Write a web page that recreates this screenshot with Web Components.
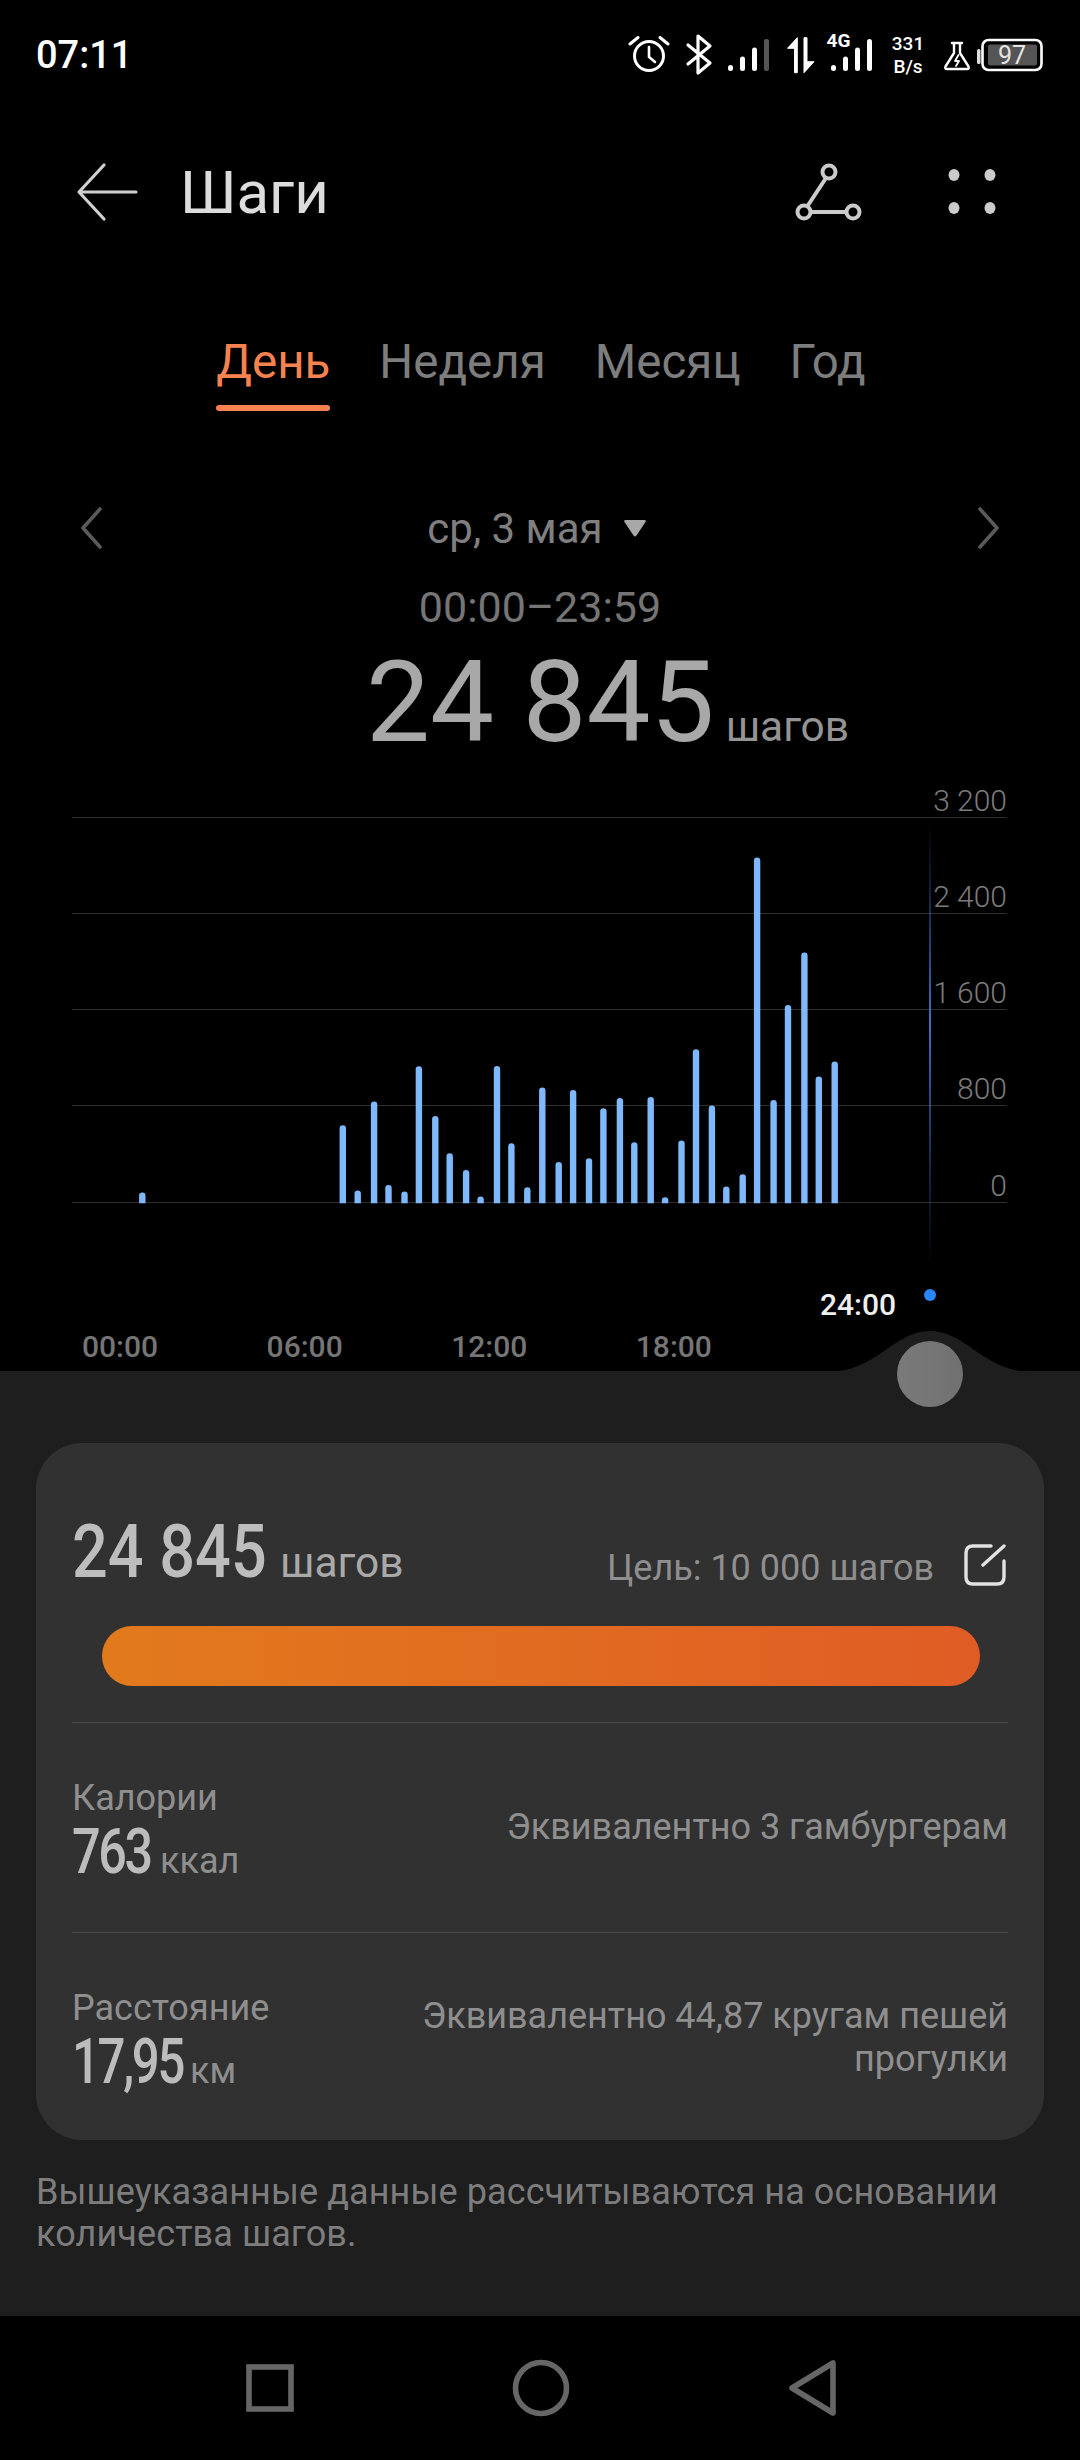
<!DOCTYPE html>
<html lang="ru">
<head>
<meta charset="utf-8">
<title>Шаги</title>
<style>
  html, body { margin: 0; padding: 0; background: #000; }
  body { width: 1080px; height: 2460px; overflow: hidden; font-family: Roboto, "Noto Sans", sans-serif; }
</style>
</head>
<body>
<status-bar></status-bar>
<app-toolbar>Шаги</app-toolbar>
<period-tabs></period-tabs>
<date-nav>ср, 3 мая</date-nav>
<step-summary></step-summary>
<step-chart></step-chart>
<health-panel>
  <stat-card>
    <goal-header></goal-header>
    <stat-row style="--value-width: 78px; --value-scale: .8">
      <span slot="label">Калории</span>
      <span slot="value">763</span>
      <span slot="unit">ккал</span>
      <span slot="note">Эквивалентно 3 гамбургерам</span>
    </stat-row>
    <stat-row style="--value-width: 108px; --value-scale: .78">
      <span slot="label">Расстояние</span>
      <span slot="value">17,95</span>
      <span slot="unit">км</span>
      <span slot="note">Эквивалентно 44,87 кругам пешей<br>прогулки</span>
    </stat-row>
  </stat-card>
  <span slot="note">Вышеуказанные данные рассчитываются на основании количества шагов.</span>
</health-panel>
<nav-bar></nav-bar>

<script>
class StatusBar extends HTMLElement {
    constructor() {
        super();
        this.attachShadow({ mode: 'open' });
    }

    connectedCallback() {
        this.shadowRoot.innerHTML = `
            <style>
                :host { display: flex; align-items: center; height: 110px; padding: 0 35.500px 0 36px; color: #fff; box-sizing: border-box; }
                .time { font-size: 38px; font-weight: 500; margin-right: auto; }
                .icons { display: flex; align-items: center; height: 44px; }
                svg { display: block; height: 44px; }
                .net { position: relative; }
                .net span { position: absolute; left: 0; top: -2px; font-size: 19px; font-weight: 700; line-height: 20px; }
                .speed { display: flex; flex-direction: column; align-items: center; width: 34px; font-size: 19px; font-weight: 500; line-height: 23px; margin: 0 18px 0 16.500px; }
            </style>
            <span class="time">07:11</span>
            <div class="icons">
                <svg width="42" viewBox="0 0 42 44" fill="none" stroke="#fff" stroke-width="3" stroke-linecap="round">
                    <circle cx="21" cy="23" r="14.500"/>
                    <path d="M21 14v10l6 5" stroke-width="2.600"/>
                    <path d="M2 11 10 4.500M40 11 32 4.500"/>
                </svg>
                <svg width="28" style="margin-left:15px" viewBox="0 0 28 44" fill="none" stroke="#fff" stroke-width="3.200" stroke-linejoin="round" stroke-linecap="round">
                    <path d="M3 12 25 30 13 40V3l12 10L3 31"/>
                </svg>
                <svg width="46" style="margin-left:14px" viewBox="0 0 46 44" fill="#fff">
                    <rect x="1" y="32" width="5" height="6" rx="2.500"/>
                    <rect x="13" y="23.500" width="5" height="14.500" rx="2.500"/>
                    <rect x="25" y="14.500" width="5" height="23.500" rx="2.500"/>
                    <rect x="37" y="6" width="5" height="32" rx="2" fill="#555"/>
                </svg>
                <svg width="28" style="margin-left:14px" viewBox="0 0 28 44" fill="#fff" stroke="#fff" stroke-width="1" stroke-linejoin="round">
                    <path d="M10.300 4.700V39.700H7.500V15.300H.5Z"/>
                    <path d="M17 39.700V4.700H20V28.700H27Z"/>
                </svg>
                <div class="net" style="margin-left:11.500px">
                    <span>4G</span>
                    <svg width="48" viewBox="0 0 48 44" fill="#fff">
                        <rect x="4" y="32" width="5" height="6" rx="2.500"/>
                        <rect x="16" y="23.500" width="5" height="14.500" rx="2.500"/>
                        <rect x="28" y="14.500" width="5" height="23.500" rx="2.500"/>
                        <rect x="40" y="6" width="5" height="32" rx="2.500"/>
                    </svg>
                </div>
                <div class="speed"><span>331</span><span>B/s</span></div>
                <svg width="28" viewBox="0 0 28 44" fill="none" stroke="#fff" stroke-width="2.400" stroke-linejoin="round" stroke-linecap="round">
                    <path d="M9 10h10M11 10v10L2.500 33.500Q1.500 36 4 36H24Q26.500 36 25.500 33.500L17 20V10"/>
                    <path d="M15.500 22 12 28h4l-3 5" stroke-width="1.800"/>
                </svg>
                <svg width="68" style="margin-left:5.500px" viewBox="0 0 68 44" fill="none">
                    <rect x="0" y="16" width="3.500" height="15" rx="1.500" fill="#ddd"/>
                    <rect x="5.500" y="7" width="59" height="30" rx="6" stroke="#fff" stroke-width="2.600"/>
                    <rect x="11" y="11.500" width="49" height="21" rx="2" fill="#555"/>
                    <text x="35" y="31" text-anchor="middle" font-family="Roboto" font-size="25" fill="#e4e4e4">97</text>
                </svg>
            </div>
        `;
    }
}

class AppToolbar extends HTMLElement {
    constructor() {
        super();
        this.attachShadow({ mode: 'open' });
    }

    connectedCallback() {
        this.shadowRoot.innerHTML = `
            <style>
                :host { display: flex; align-items: center; height: 164px; padding: 0 0 0 76px; color: #dcdcdc; }
                svg { display: block; }
                .title { font-size: 60px; margin-left: 40px; margin-right: auto; }
            </style>
            <svg width="64" height="60" viewBox="0 0 64 60" fill="none" stroke="#cfcfcf" stroke-width="3.200" stroke-linecap="round" stroke-linejoin="round">
                <path d="M60 30H3M28 3 3 30l25 27"/>
            </svg>
            <span class="title"><slot></slot></span>
            <svg width="70" height="64" viewBox="0 0 70 64" fill="none" stroke="#cbcbcb" stroke-width="4">
                <circle cx="36" cy="12" r="6.500"/>
                <circle cx="11" cy="52" r="6.500"/>
                <circle cx="60" cy="52" r="6.500"/>
                <path d="M33 18 14.500 46M17.500 52H53.500"/>
            </svg>
            <svg style="margin:0 84px 0 85px" width="48" height="48" viewBox="0 0 48 48" fill="#cbcbcb">
                <ellipse cx="6" cy="7" rx="5.500" ry="6"/>
                <ellipse cx="42" cy="7" rx="5.500" ry="6"/>
                <ellipse cx="6" cy="40" rx="5.500" ry="6"/>
                <ellipse cx="42" cy="40" rx="5.500" ry="6"/>
            </svg>
        `;
    }
}

class PeriodTabs extends HTMLElement {
    constructor() {
        super();
        this.attachShadow({ mode: 'open' });
    }

    connectedCallback() {
        const tabs = ['День', 'Неделя', 'Месяц', 'Год'];
        this.shadowRoot.innerHTML = `
            <style>
                :host { display: flex; justify-content: center; gap: 49px; font-size: 47.500px; color: #7d7d7d; height: 137px; box-sizing: border-box; padding: 58px 0 0 2px; line-height: 60px; }
                span { display: block; height: 79px; position: relative; }
                .on { color: #f6834f; }
                .on::after { content: ''; position: absolute; left: 0; right: 0; bottom: 0; height: 6px; border-radius: 3px; background: #f6834f; }
            </style>
            ${tabs.map((t, i) => `<span class="${i === 0 ? 'on' : ''}">${t}</span>`).join('')}
        `;
    }
}

class DateNav extends HTMLElement {
    constructor() {
        super();
        this.attachShadow({ mode: 'open' });
    }

    connectedCallback() {
        this.shadowRoot.innerHTML = `
            <style>
                :host { display: flex; align-items: center; justify-content: space-between; height: 78px; margin-top: 78px; padding: 0 80px; font-size: 42px; color: #7f7f7f; }
                svg { display: block; }
                .date { display: flex; align-items: center; gap: 21px; margin-right: 7px; }
            </style>
            <svg width="22" height="42" viewBox="0 0 22 42" fill="none" stroke="#5a5a5a" stroke-width="3.600" stroke-linecap="round" stroke-linejoin="round"><path d="M20 2 3 21l17 19"/></svg>
            <div class="date">
                <span><slot></slot></span>
                <svg width="22" height="17" viewBox="0 0 22 17" fill="#a8a8a8"><path d="M1.500 0H20.500Q22.500 0 21.500 2L12.500 15.500Q11 17.500 9.500 15.500L.5 2Q-.5 0 1.500 0Z"/></svg>
            </div>
            <svg width="22" height="42" viewBox="0 0 22 42" fill="none" stroke="#5a5a5a" stroke-width="3.600" stroke-linecap="round" stroke-linejoin="round"><path d="M2 2l17 19L2 40"/></svg>
        `;
    }
}

class StepSummary extends HTMLElement {
    constructor() {
        super();
        this.attachShadow({ mode: 'open' });
    }

    connectedCallback() {
        this.shadowRoot.innerHTML = `
            <style>
                :host { display: block; height: 203px; padding-top: 16px; box-sizing: border-box; }
                .range { text-align: center; font-size: 43px; line-height: 48px; color: #757575; }
                .total { display: flex; align-items: baseline; padding-left: 366px; margin-top: 6px; height: 130px; line-height: 130px; white-space: nowrap; }
                .num { font-size: 114px; color: #a8a8a8; }
                .unit { font-size: 42.500px; color: #949494; margin-left: 11px; }
            </style>
            <div class="range">00:00–23:59</div>
            <div class="total"><span class="num">24 845</span><span class="unit">шагов</span></div>
        `;
    }
}

class StepChart extends HTMLElement {
    constructor() {
        super();
        this.attachShadow({ mode: 'open' });
    }

    connectedCallback() {
        // [x, height] read off the reference
        const bars = [[142.3, 10.7], [342.8, 78], [357.7, 12.7], [374.1, 101.7], [388.5, 18.3], [404.5, 11.7], [418.9, 137], [435.3, 87.3], [449.7, 50], [466.1, 33.3], [480.6, 6.7], [497, 137.3], [511.4, 60], [527.3, 16], [542.3, 115.7], [558.7, 41.3], [573.1, 113.3], [589, 45], [603.4, 95], [619.9, 105.3], [634.3, 61], [650.7, 106.3], [665.1, 6], [681.5, 62.7], [696, 154], [711.9, 97.7], [726.3, 16.7], [742.7, 29], [757.1, 345.7], [773.6, 103.3], [788, 198.3], [804.4, 250.7], [818.8, 126.7], [834.7, 141.7]];
        const base = 433.3;
        const paths = bars.map(([x, h]) => {
            const r = 3.2;
            const top = base - h;
            return `<path d="M${x - r} ${base}V${top + r}A${r} ${r} 0 0 1 ${x + r} ${top + r}V${base}Z"/>`;
        }).join('');
        const rows = ['3 200', '2 400', '1 600', '800', '0'];
        this.shadowRoot.innerHTML = `
            <style>
                :host { display: block; position: relative; height: 601px; }
                .plot { margin: 0 73px 0 72px; }
                .row { box-sizing: border-box; height: 96px; display: flex; justify-content: flex-end; align-items: flex-end; border-bottom: 1px solid #2f2f2f; font-size: 30px; font-weight: 300; color: #7b7b7b; line-height: 32px; white-space: nowrap; }
                .row.first { height: 48px; }
                .row.last { height: 97px; }
                svg { position: absolute; left: 0; top: 0; }
                .hours { display: grid; grid-template-columns: repeat(4, 184.6px); padding-left: 82px; margin-top: 126px; font-size: 30px; font-weight: 500; line-height: 36px; color: #757575; }
                .now { position: absolute; left: 820px; top: 517px; font-size: 30px; font-weight: 500; line-height: 36px; color: #efefef; }
                .dot { position: absolute; left: 924px; top: 519px; width: 12px; height: 12px; border-radius: 50%; background: #2a86ff; }
            </style>
            <div class="plot">
                ${rows.map((t, i) => `<div class="row ${i === 0 ? 'first' : ''} ${i === 4 ? 'last' : ''}">${t}</div>`).join('')}
            </div>
            <svg width="1080" height="510" viewBox="0 0 1080 510">
                <defs>
                    <linearGradient id="cursor" x1="0" y1="0" x2="0" y2="1">
                        <stop offset="0" stop-color="#2f5db0" stop-opacity="0"/>
                        <stop offset=".45" stop-color="#3f70c8"/>
                        <stop offset="1" stop-color="#2f5db0" stop-opacity="0"/>
                    </linearGradient>
                </defs>
                <rect x="929" y="53" width="2" height="442" fill="url(#cursor)"/>
                <g fill="#7db9fc">${paths}</g>
            </svg>
            <div class="hours"><span>00:00</span><span>06:00</span><span>12:00</span><span>18:00</span></div>
            <span class="now">24:00</span>
            <span class="dot"></span>
        `;
    }
}

class HealthPanel extends HTMLElement {
    constructor() {
        super();
        this.attachShadow({ mode: 'open' });
    }

    connectedCallback() {
        this.shadowRoot.innerHTML = `
            <style>
                :host { display: block; position: relative; box-sizing: border-box; height: 945px; background: #1e1e1e; padding: 72px 36px 0; }
                .bump { position: absolute; left: 827px; top: -40px; display: block; }
                .knob { position: absolute; left: 897px; top: -30px; width: 66px; height: 66px; border-radius: 50%; background: linear-gradient(90deg, #7a7a7a, #717171); }
                .note { margin-top: 31px; font-size: 36px; line-height: 42px; color: #7d7d7d; letter-spacing: .1px; }
            </style>
            <svg class="bump" width="206" height="41" viewBox="0 0 206 41"><path d="M0 41C50 41 66 0 103 0S156 41 206 41Z" fill="#1e1e1e"/></svg>
            <span class="knob"></span>
            <slot></slot>
            <div class="note"><slot name="note"></slot></div>
        `;
    }
}

class StatCard extends HTMLElement {
    constructor() {
        super();
        this.attachShadow({ mode: 'open' });
    }

    connectedCallback() {
        this.shadowRoot.innerHTML = `
            <style>
                :host { display: block; box-sizing: border-box; height: 697px; padding: 0 36px; border-radius: 46px; background: #313131; }
            </style>
            <slot></slot>
        `;
    }
}

class GoalHeader extends HTMLElement {
    constructor() {
        super();
        this.attachShadow({ mode: 'open' });
    }

    connectedCallback() {
        this.shadowRoot.innerHTML = `
            <style>
                :host { display: block; height: 279px; padding-top: 68px; box-sizing: border-box; }
                .head { display: flex; align-items: baseline; height: 80px; line-height: 80px; white-space: nowrap; }
                .num { display: block; width: 192px; font-size: 75px; font-weight: 500; color: #bdbdbd; transform: scaleX(.84); transform-origin: left; }
                .unit { font-size: 42.500px; color: #a9a9a9; margin-left: 16px; margin-right: auto; }
                .goal { align-self: center; margin-top: 33px; font-size: 36px; color: #8f8f8f; }
                svg { align-self: center; margin: 27px 2px 0 30px; }
                .bar { height: 60px; margin: 35px 28px 0 30px; border-radius: 30px; background: linear-gradient(90deg, #e27a1c, #e05c25); }
            </style>
            <div class="head">
                <span class="num">24 845</span>
                <span class="unit">шагов</span>
                <span class="goal">Цель: 10 000 шагов</span>
                <svg width="42" height="42" viewBox="0 0 42 42" fill="none" stroke="#e2e2e2" stroke-width="3.400" stroke-linecap="round">
                    <path d="M40 17V33Q40 40 33 40H9Q2 40 2 33V9Q2 2 9 2H27"/>
                    <path d="M19 21 40 2"/>
                </svg>
            </div>
            <div class="bar"></div>
        `;
    }
}

class StatRow extends HTMLElement {
    constructor() {
        super();
        this.attachShadow({ mode: 'open' });
    }

    connectedCallback() {
        this.shadowRoot.innerHTML = `
            <style>
                :host { display: flex; align-items: center; justify-content: space-between; height: 210px; box-sizing: border-box; border-top: 1px solid #4b4b4b; }
                .left { margin-top: 16px; }
                .label { font-size: 36px; line-height: 42px; color: #8f8f8f; }
                .figure { display: flex; align-items: baseline; line-height: 66px; white-space: nowrap; }
                .value { display: block; width: var(--value-width); font-size: 63px; font-weight: 500; color: #bcbcbc; letter-spacing: -3px; transform: scaleX(var(--value-scale)); transform-origin: left; }
                .unit { font-size: 36px; color: #8f8f8f; margin-left: 10px; }
                .note { font-size: 36px; line-height: 43px; color: #8f8f8f; text-align: right; }
            </style>
            <div class="left">
                <div class="label"><slot name="label"></slot></div>
                <div class="figure">
                    <span class="value"><slot name="value"></slot></span>
                    <span class="unit"><slot name="unit"></slot></span>
                </div>
            </div>
            <div class="note"><slot name="note"></slot></div>
        `;
    }
}

class NavBar extends HTMLElement {
    constructor() {
        super();
        this.attachShadow({ mode: 'open' });
    }

    connectedCallback() {
        this.shadowRoot.innerHTML = `
            <style>
                :host { display: flex; align-items: center; height: 144px; padding-left: 246px; }
                svg { display: block; }
            </style>
            <svg width="48" height="50" viewBox="0 0 48 50" fill="none" stroke="#666" stroke-width="5.600"><rect x="3" y="4" width="42" height="42"/></svg>
            <svg style="margin-left:218px" width="58" height="58" viewBox="0 0 58 58" fill="none" stroke="#666" stroke-width="5.600"><circle cx="29" cy="29" r="25.500"/></svg>
            <svg style="margin-left:219px" width="50" height="58" viewBox="0 0 50 58" fill="none" stroke="#666" stroke-width="5.600" stroke-linejoin="round"><path d="M44 4V54L3 29Z"/></svg>
        `;
    }
}

customElements.define('status-bar', StatusBar);
customElements.define('app-toolbar', AppToolbar);
customElements.define('period-tabs', PeriodTabs);
customElements.define('date-nav', DateNav);
customElements.define('step-summary', StepSummary);
customElements.define('step-chart', StepChart);
customElements.define('health-panel', HealthPanel);
customElements.define('stat-card', StatCard);
customElements.define('goal-header', GoalHeader);
customElements.define('stat-row', StatRow);
customElements.define('nav-bar', NavBar);
</script>
</body>
</html>
